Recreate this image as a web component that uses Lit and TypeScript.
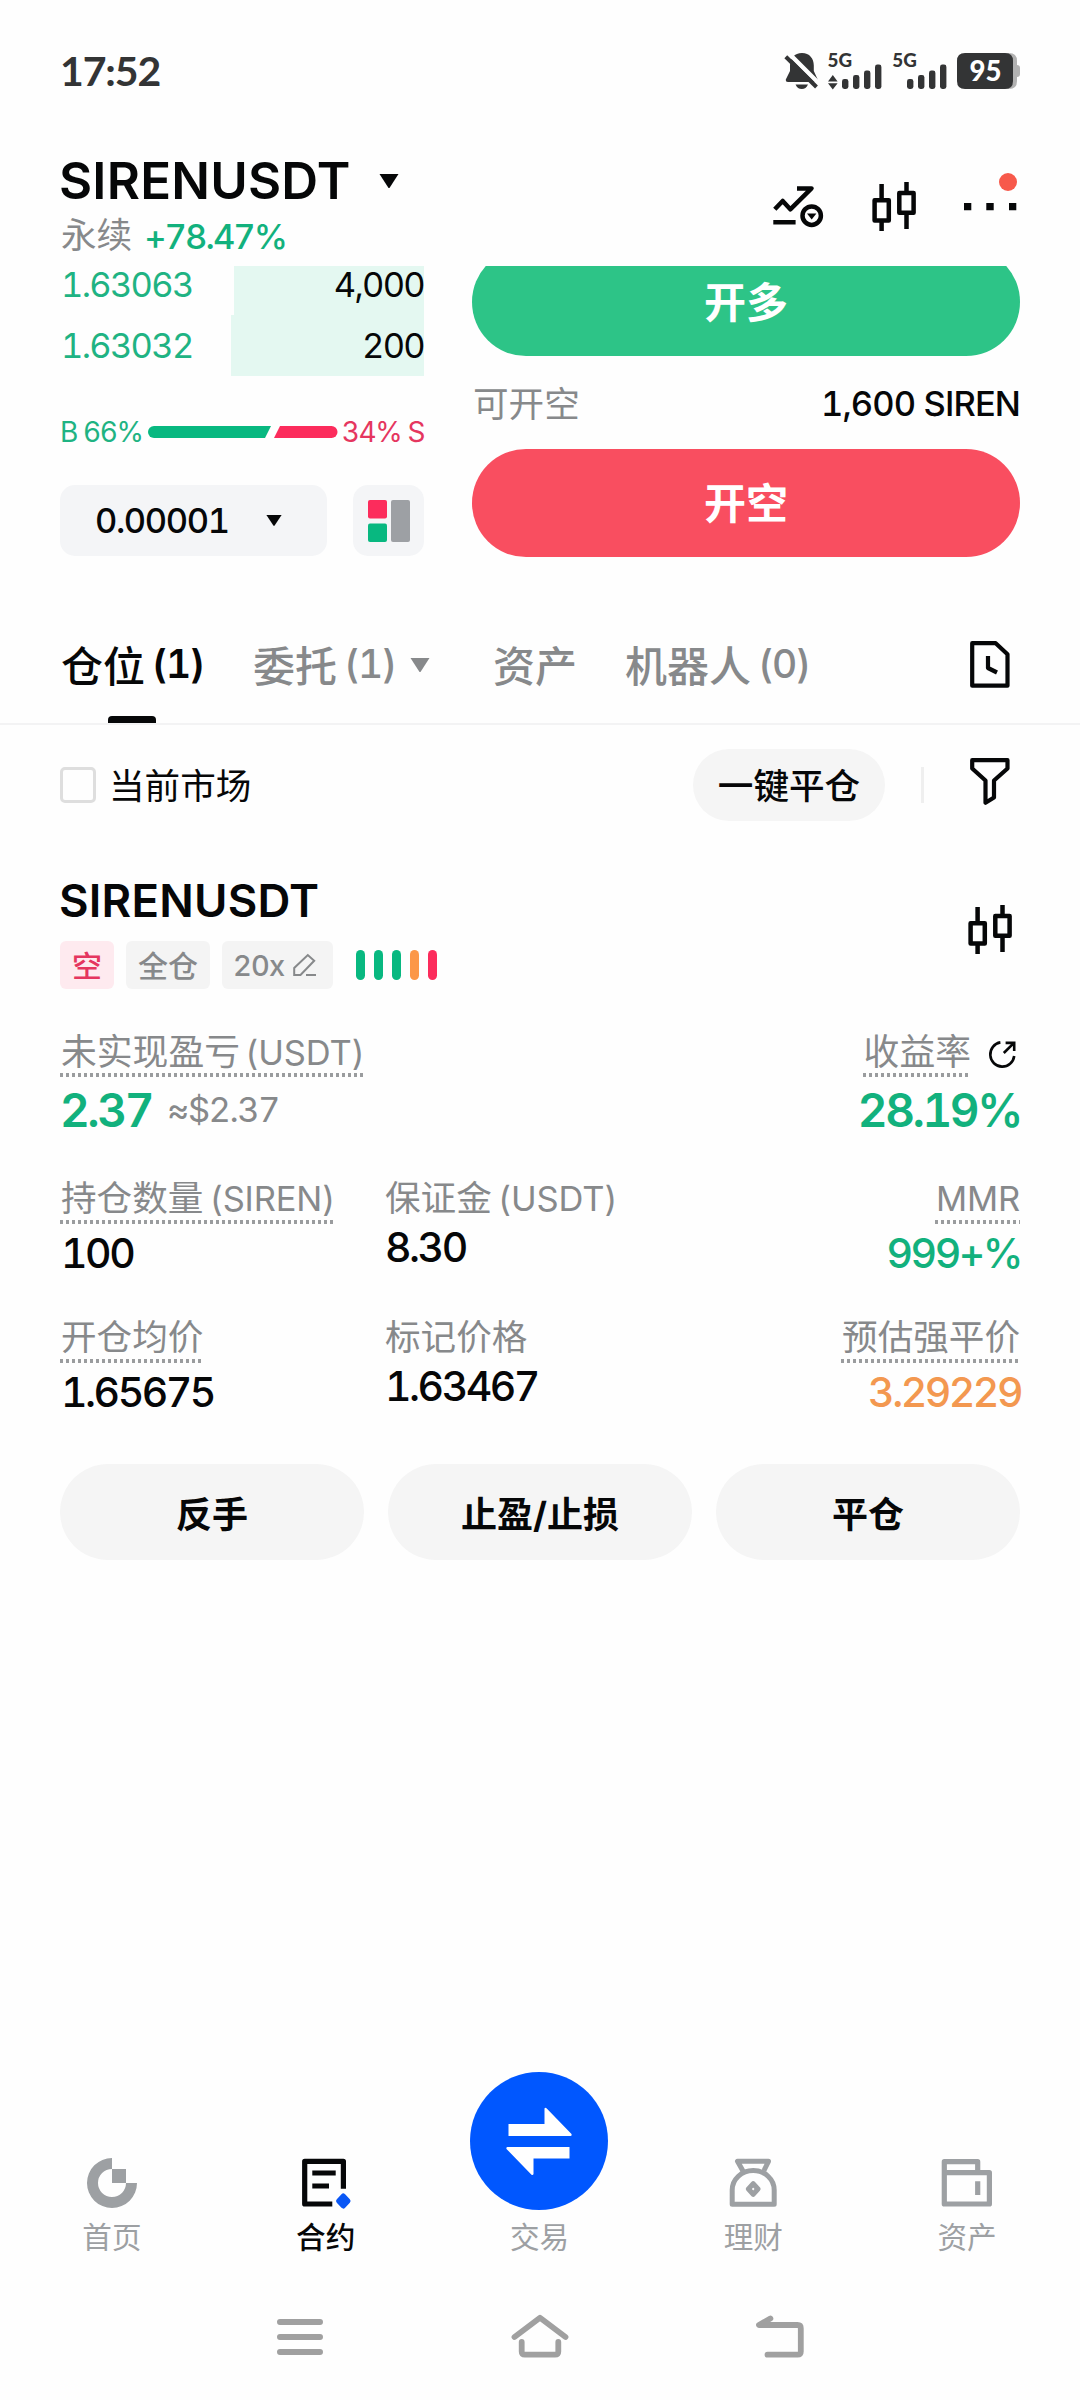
import { LitElement, html, css, svg, nothing } from "lit";
import { customElement, property } from "lit/decorators.js";

const candles = html`<svg width="44" height="49" viewBox="0 0 44 49" fill="none" stroke="#060708" stroke-width="4.5" stroke-linejoin="round">
  <path d="M2.6 18.3H16.8V38.4H2.6ZM9.6 2V18M9.6 38V49M27.3 11H41.6V30.8H27.3ZM34.5 0V11M34.5 31V47"/>
</svg>`;

const caret = (w: number, h: number, color: string) => html`<svg width=${w} height=${h} viewBox="0 0 20 14" preserveAspectRatio="none">
  <path d="M0.5 0H19.5L10.8 13.4Q10 14.4 9.2 13.4Z" fill=${color}/>
</svg>`;

const signalBars = (x: number) => svg`<g fill="#333435">
  <rect x=${x} y="26" width="6.4" height="10" rx="2.4"/>
  <rect x=${x + 11} y="22" width="6.4" height="14" rx="2.4"/>
  <rect x=${x + 22} y="17.5" width="6.4" height="18.5" rx="2.4"/>
  <rect x=${x + 33} y="11.5" width="6.4" height="24.5" rx="2.4"/>
</g>`;

/** A label over a value; the label may carry a dotted underline. */
@customElement("data-field")
class DataField extends LitElement {
  @property() label = "";
  @property() value = "";
  @property() tone = "";
  @property({ type: Boolean }) plain = false;
  @property({ type: Boolean }) end = false;

  static styles = css`
    :host { display: block; }
    .field { display: flex; flex-direction: column; align-items: flex-start; }
    .end { align-items: flex-end; }
    .label { font-size: 35.6px; line-height: 49px; height: 44px; color: #87898b; white-space: pre; padding-left: 1px; }
    .latin { font-size: 34.5px; letter-spacing: -0.2px; margin-left: -3px; }
    .latin.only { margin-left: 0; }
    .dots {
      height: 4px; margin-top: 2px;
      background: repeating-linear-gradient(90deg, #9a9c9e 0 3px, transparent 3px 6px);
    }
    .value { font-size: 41px; font-weight: 500; line-height: 50px; margin-top: 4px; letter-spacing: -2.5px; padding-left: 1px; color: #060708; }
    .end .value { margin-right: -1px; }
    .up { color: #12b17d; }
    .warn { color: #f39850; }
  `;

  render() {
    const [, cjk, latin] = /^([^\x00-\x7f]*)(.*)$/.exec(this.label)!;
    return html`<div class="field ${this.end ? "end" : ""}">
      <div>
        <div class="label">${cjk}${latin ? html`<span class="latin ${cjk ? "" : "only"}">${latin}</span>` : nothing}</div>
        ${this.plain ? nothing : html`<div class="dots"></div>`}
      </div>
      <div class="value ${this.tone}">${this.value}</div>
    </div>`;
  }
}

@customElement("app-root")
class AppRoot extends LitElement {
  static styles = css`
    :host {
      display: flex; flex-direction: column; box-sizing: border-box;
      width: 1080px; height: 2400px; overflow: hidden; background: #fefefe; color: #060708;
      font-family: Inter, "Noto Sans CJK SC", sans-serif;
      font-variant-numeric: tabular-nums;
    }
    svg { display: block; flex: none; overflow: visible; }
    div, span { box-sizing: border-box; white-space: nowrap; }

    .status { height: 142px; flex: none; display: flex; align-items: center; justify-content: space-between; padding: 0 60px; }
    .clock { font: 700 41px/50px Lato, sans-serif; color: #333435; letter-spacing: -1.1px; }
    .status-icons { display: flex; align-items: center; }
    .net { font: 900 19px Lato, sans-serif; fill: #333435; }
    .level { font: 900 29px Lato, sans-serif; fill: #fff; }

    .header { height: 124px; flex: none; display: flex; justify-content: space-between; padding: 8px 60px 0 59px; }
    .pair { display: flex; align-items: center; gap: 28px; height: 61px; font-size: 51px; font-weight: 600; letter-spacing: 0.2px; }
    .sub { display: flex; align-items: center; height: 50px; gap: 12px; font-size: 35.6px; line-height: 50px; color: #87898b; padding-left: 2px; }
    .change { color: #12b17d; font-size: 34.5px; font-weight: 500; letter-spacing: -1.9px; padding-top: 1px; }
    .tools { display: flex; align-items: flex-start; }
    .tools .trend { margin: 35px 49px 0 0; }
    .tools .kline { margin: 32px 48px 0 0; }
    .tools .more { margin-top: 22px; }

    .trade { height: 290px; flex: none; display: flex; gap: 48px; padding: 0 60px; }
    .book { width: 364px; display: flex; flex-direction: column; }
    .row { height: 61px; flex: none; display: flex; align-items: center; justify-content: space-between; font-size: 34.5px; line-height: 34px; padding: 0 0 0 1px; letter-spacing: -1.7px; }
    .row:first-child { height: 49px; align-items: flex-end; }
    .price { color: #1fb383; }
    .depth { align-self: stretch; display: flex; align-items: center; justify-content: flex-end; background: #e4f8f1; padding-right: 0; }
    .row:first-child .price, .row:first-child .depth { padding-bottom: 13px; }
    .row:first-child .depth { align-items: flex-end; }
    .ratio { height: 48px; margin-top: 32px; display: flex; align-items: center; justify-content: space-between; font-size: 28px; padding-left: 0; letter-spacing: -1.4px; }
    .ratio svg { margin-left: 2px; }
    .buy { color: #1fb383; }
    .sell { color: #e5365f; }
    .selects { display: flex; gap: 26px; margin-top: 29px; }
    .step { width: 267px; height: 71px; border-radius: 15px; background: #f4f5f7; display: flex; align-items: center; justify-content: space-between; padding: 0 45px 0 35px; font-size: 34.5px; font-weight: 500; letter-spacing: -1.4px; }
    .layout { width: 71px; height: 71px; border-radius: 15px; background: #f4f5f7; display: flex; align-items: center; justify-content: center; }

    .order { flex: 1; display: flex; flex-direction: column; height: 291px; }
    .cta { height: 108px; flex: none; border-radius: 54px; display: flex; align-items: center; justify-content: center; color: #fff; font-size: 42px; font-weight: 700; padding-bottom: 5px; }
    .clip { height: 90px; flex: none; display: flex; flex-direction: column; justify-content: flex-end; overflow: hidden; }
    .long { background: #2dc487; }
    .short { background: #f94e60; }
    .avail { height: 93px; flex: none; display: flex; align-items: center; justify-content: space-between; font-size: 35.6px; color: #87898b; padding-left: 1px; }
    .avail span { padding-bottom: 3px; }
    .avail .amount { color: #060708; font-size: 34.5px; font-weight: 500; letter-spacing: -0.9px; padding: 1px 0 0; }

    .tabs { height: 169px; flex: none; display: flex; align-items: flex-end; border-bottom: 2px solid #f3f3f4; padding: 0 60px; color: #87898b; font-size: 42px; }
    .tab { height: 116px; display: flex; align-items: center; position: relative; padding-left: 1px; padding-bottom: 4px; font-weight: 500; }
    .tab .cnt { font-size: 39px; letter-spacing: -1.2px; margin-left: 7px; padding-top: 1px; }
    .tab svg { margin: 3px 0 0 14px; }
    .t1 { width: 192px; color: #060708; }
    .t1 .cnt { font-weight: 600; }
    .t1::after { content: ""; position: absolute; left: 48px; bottom: 0; width: 48px; height: 7px; border-radius: 4px 4px 0 0; background: #060708; }
    .t2 { width: 240px; }
    .t3 { width: 132px; }
    .t4 { flex: 1; }
    .tabicon { height: 116px; display: flex; align-items: center; padding-right: 10px; padding-bottom: 2px; }

    .filters { height: 120px; flex: none; display: flex; align-items: center; padding: 0 70px 0 60px; font-size: 35.6px; }
    .box { width: 36px; height: 36px; border: 3px solid #dedede; border-radius: 5px; margin-right: 13px; }
    .market { padding-bottom: 3px; }
    .grow { flex: 1; }
    .closeall { width: 192px; height: 72px; border-radius: 36px; background: #f5f5f5; display: flex; align-items: center; justify-content: center; font-weight: 500; margin-right: 36px; padding-bottom: 3px; }
    .sep { width: 3px; height: 36px; background: #efefef; margin-right: 46px; }
    .funnel { margin-top: -8px; }

    .card { padding: 0 60px; display: flex; flex-direction: column; flex: none; }
    .cardhead { height: 144px; display: flex; justify-content: space-between; padding-right: 8px; margin-top: 27px; }
    .name { height: 58px; line-height: 58px; font-size: 45.5px; font-weight: 600; letter-spacing: 0.2px; margin-left: -1px; }
    .tags { display: flex; align-items: center; margin-top: 11px; gap: 12px; }
    .tag { height: 48px; border-radius: 6px; background: #f4f4f4; color: #87898b; font-size: 30px; display: flex; align-items: center; padding: 0 12px 3px; font-weight: 500; }
    .tag.side { background: #feeaef; color: #e5365f; }
    .tag.lev { font-size: 29px; gap: 9px; padding: 0 15px 0 11px; width: 111px; letter-spacing: -0.8px; }
    .risk { display: flex; gap: 9px; margin-left: 11px; }
    .risk i { width: 9px; height: 30px; border-radius: 5px; background: #08b880; }
    .risk .mid { background: #fc9748; }
    .risk .high { background: #fc2c5c; }
    .cardhead svg { margin-top: 33px; }
    .tag svg { margin-top: 0; }

    .pnl { display: flex; justify-content: space-between; height: 158px; padding-top: 11px; }
    .lbl { font-size: 35.8px; line-height: 51px; height: 44px; color: #87898b; white-space: pre; padding-left: 1px; }
    .lbl .latin { font-size: 34.5px; letter-spacing: -0.2px; white-space: pre; margin-left: -4px; }
    .dots { height: 4px; margin-top: 2px; background: repeating-linear-gradient(90deg, #9a9c9e 0 3px, transparent 3px 6px); }
    .roi { display: flex; flex-direction: column; align-items: flex-end; }
    .roihead { display: flex; gap: 17px; padding-right: 3px; }
    .roihead svg { margin-top: 13px; }
    .big { font-size: 46px; font-weight: 600; line-height: 56px; color: #12b17d; letter-spacing: -2.4px; margin-top: 5px; display: flex; align-items: center; gap: 15px; }
    .roi .big { margin-right: -1px; }
    .approx { font-size: 34.5px; font-weight: 400; color: #87898b; letter-spacing: -1.5px; }
    .grid { display: grid; grid-template-columns: 324px 1fr auto; grid-auto-rows: 139px; }
    .actions { display: flex; gap: 24px; margin-top: 12px; }
    .action { flex: 1; height: 96px; border-radius: 48px; background: #f5f5f5; display: flex; align-items: center; justify-content: center; font-size: 36px; font-weight: 700; padding-bottom: 1px; }

    .nav { margin-top: auto; flex: none; height: 190px; display: flex; align-items: flex-end; padding: 0 6px 0 5px; color: #9da0a3; }
    .item { flex: 1; display: flex; flex-direction: column; align-items: center; gap: 6px; font-size: 29.6px; line-height: 42px; height: 100%; justify-content: flex-end; padding-bottom: 1px; }
    .on { color: #060708; font-weight: 500; }
    .sys { height: 141px; flex: none; display: flex; padding: 54px 180px 0; }
    .key { flex: 1; display: flex; justify-content: center; }
  `;

  render() {
    return html`
      <div class="status">
        <span class="clock">17:52</span>
        <div class="status-icons">
          <svg width="235" height="36" viewBox="0 0 235 36">
            <path d="M17 0C9.500 0 5 5.500 5 12.500V18L0.800 26.500Q0.600 29 3 29H30.500Q33 29 32.700 26.500L28.800 18V12.500C28.800 5.500 24.500 0 17 0Z" fill="#333435"/>
            <path d="M10.500 31.500H23Q21 36 16.800 36Q12.500 36 10.500 31.500Z" fill="#333435"/>
            <path d="M4.500 1L35 31.500" stroke="#fefefe" stroke-width="4.500"/>
            <path d="M0.800 3.800L31.500 34" stroke="#333435" stroke-width="4"/>
            <text class="net" x="42.500" y="14" textLength="24.500" lengthAdjust="spacingAndGlyphs">5G</text>
            <path d="M43 28.500L47.800 22L52.600 28.500ZM43 30.200L47.800 36.500L52.600 30.200Z" fill="#333435"/>
            ${signalBars(57)}
            <text class="net" x="107.300" y="14" textLength="24.500" lengthAdjust="spacingAndGlyphs">5G</text>
            ${signalBars(122)}
            <path d="M180 0H224Q232 0 232 8V12Q235 12 235 15V21Q235 24 232 24V28Q232 36 224 36H180Z" fill="#b2b2b2"/>
            <path d="M180 0H220Q228 0 228 8V28Q228 36 220 36H180Q172 36 172 28V8Q172 0 180 0Z" fill="#333435"/>
            <text class="level" x="184.500" y="28.300" textLength="32" lengthAdjust="spacingAndGlyphs">95</text>
          </svg>
        </div>
      </div>

      <div class="header">
        <div>
          <div class="pair"><span>SIRENUSDT</span>${caret(20, 14, "#060708")}</div>
          <div class="sub"><span>永续</span><span class="change">+78.47%</span></div>
        </div>
        <div class="tools">
          <svg class="trend" width="50" height="42" viewBox="0 0 50 42" fill="none" stroke="#060708" stroke-width="4.500">
            <path d="M1.800 24.300L9.700 16L17.300 24.300L38.500 3.400H24M0.300 37.300H22.600" stroke-linejoin="round"/>
            <circle cx="38.700" cy="30.700" r="9.200"/>
            <path d="M34 28.400H43.400L38.700 34.400Z" fill="#060708" stroke="none"/>
          </svg>
          <div class="kline">${candles}</div>
          <svg class="more" width="56" height="40" viewBox="0 0 56 40">
            <path d="M0 31H7.300V38.300H0ZM22.300 31H29.700V38.300H22.300ZM45 31H52.300V38.300H45Z" fill="#060708"/>
            <circle cx="44" cy="10" r="9" fill="#f7594b"/>
          </svg>
        </div>
      </div>

      <div class="trade">
        <div class="book">
          <div class="rows">
            ${[["1.63063", "4,000", 190], ["1.63032", "200", 193]].map(
              ([p, a, w]) => html`<div class="row"><span class="price">${p}</span><span class="depth" style="width:${w}px">${a}</span></div>`
            )}
          </div>
          <div class="ratio">
            <span class="buy">B 66%</span>
            <svg width="190" height="12" viewBox="0 0 190 12">
              <path d="M6 0H123L117 12H6A6 6 0 0 1 6 0Z" fill="#08b880"/>
              <path d="M132 0H183.500A6 6 0 0 1 183.500 12H126Z" fill="#fc2c5c"/>
            </svg>
            <span class="sell">34% S</span>
          </div>
          <div class="selects">
            <div class="step"><span>0.00001</span>${caret(16, 11, "#060708")}</div>
            <div class="layout">
              <svg width="42" height="42" viewBox="0 0 42 42">
                <rect width="19" height="18.500" rx="2" fill="#fc2c5c"/>
                <rect y="23.500" width="19" height="18.500" rx="2" fill="#08b880"/>
                <rect x="23" width="19" height="42" rx="2" fill="#9da0a4"/>
              </svg>
            </div>
          </div>
        </div>
        <div class="order">
          <div class="clip"><div class="cta long">开多</div></div>
          <div class="avail"><span>可开空</span><span class="amount">1,600 SIREN</span></div>
          <div class="cta short">开空</div>
        </div>
      </div>

      <div class="tabs">
        <div class="tab t1">仓位<span class="cnt">(1)</span></div>
        <div class="tab t2">委托<span class="cnt">(1)</span>${caret(20, 14, "#87898b")}</div>
        <div class="tab t3">资产</div>
        <div class="tab t4">机器人<span class="cnt">(0)</span></div>
        <div class="tabicon">
          <svg width="40" height="47" viewBox="0 0 40 47" fill="none" stroke="#060708" stroke-width="4.200" stroke-linejoin="round">
            <path d="M2.200 2.200H25.700L37.500 13.300V44.700H2.200Z"/>
            <path d="M18 15V27L27 31.500"/>
          </svg>
        </div>
      </div>

      <div class="filters">
        <span class="box"></span><span class="market">当前市场</span><span class="grow"></span>
        <span class="closeall">一键平仓</span><span class="sep"></span>
        <svg class="funnel" width="40" height="47" viewBox="0 0 40 47" fill="none" stroke="#060708" stroke-width="4.200" stroke-linejoin="round">
          <path d="M2.200 2.200H37.500V10.500L24 22.500V39.500L15.500 44.700V22.500L2.200 10.500Z"/>
        </svg>
      </div>

      <div class="card">
        <div class="cardhead">
          <div>
            <div class="name">SIRENUSDT</div>
            <div class="tags">
              <span class="tag side">空</span>
              <span class="tag">全仓</span>
              <span class="tag lev">20x
                <svg width="24" height="24" viewBox="0 0 24 24" fill="none" stroke="#87898b" stroke-width="2">
                  <path d="M1.200 22V15L14.800 2L21.200 7.800L7.500 22ZM13 22H23"/>
                </svg>
              </span>
              <div class="risk"><i></i><i></i><i></i><i class="mid"></i><i class="high"></i></div>
            </div>
          </div>
          ${candles}
        </div>

        <div class="pnl">
          <div>
            <div class="lbl">未实现盈亏<span class="latin"> (USDT)</span></div>
            <div class="dots"></div>
            <div class="big">2.37<span class="approx">≈$2.37</span></div>
          </div>
          <div class="roi">
            <div class="roihead">
              <div><div class="lbl">收益率</div><div class="dots"></div></div>
              <svg width="29" height="29" viewBox="0 0 29 29" fill="none" stroke="#060708" stroke-width="2.600">
                <path d="M12.400 2.400A12 12.200 0 1 0 26.200 16M15.800 13L26 2.900M17.600 2.900H26.200V11"/>
              </svg>
            </div>
            <div class="big">28.19%</div>
          </div>
        </div>

        <div class="grid">
          <data-field label="持仓数量 (SIREN)" value="100"></data-field>
          <data-field label="保证金 (USDT)" value="8.30" plain></data-field>
          <data-field label="MMR" value="999+%" tone="up" end></data-field>
          <data-field label="开仓均价" value="1.65675"></data-field>
          <data-field label="标记价格" value="1.63467" plain></data-field>
          <data-field label="预估强平价" value="3.29229" tone="warn" end></data-field>
        </div>

        <div class="actions">
          <div class="action">反手</div>
          <div class="action">止盈/止损</div>
          <div class="action">平仓</div>
        </div>
      </div>

      <div class="nav">
        <div class="item">
          <svg width="52" height="54" viewBox="0 0 52 54" fill="#9da0a3">
            <path d="M26 2A25 25 0 1 0 51 27H40A14 14 0 1 1 26 13ZM26 13H40V27H26Z"/>
          </svg>首页
        </div>
        <div class="item on">
          <svg width="52" height="54" viewBox="0 0 52 54" fill="none" stroke="#060708" stroke-width="5.200">
            <path d="M43.400 32.700V5.300H4.700V48H32.300M12.300 17H35.700M12.300 30H29" stroke-linejoin="round"/>
            <path d="M43.300 40L48 45L43.300 50L38.600 45Z" fill="#0a57f5" stroke="#0a57f5" stroke-width="5" stroke-linejoin="round"/>
          </svg>合约
        </div>
        <div class="item">
          <svg width="138" height="138" viewBox="0 0 138 138">
            <circle cx="69" cy="69" r="69" fill="#0057ff"/>
            <path d="M38.500 52H74.500V36.500Q75 35.300 76.500 36.200L101.500 62Q102 64 100.500 64H38.500ZM99.500 75V86.500H63.500V102Q63 103.600 61.500 102.800L36.500 77Q36 75 37.500 75Z" fill="#fff"/>
          </svg>交易
        </div>
        <div class="item">
          <svg width="49" height="54" viewBox="0 0 49 54" fill="none" stroke="#9da0a3" stroke-width="5" stroke-linejoin="round">
            <path d="M3.200 48.300V34A21 19.500 0 0 1 45.200 34V48.300ZM13.700 14.500L8.500 5.300H39.500L35 14.500M24.200 27.700L29 33L24.200 38.300L19.400 33Z"/>
          </svg>理财
        </div>
        <div class="item">
          <svg width="52" height="54" viewBox="0 -1 52 54" fill="none" stroke="#9da0a3" stroke-width="5.200" stroke-linejoin="round">
            <path d="M3.300 15.700H48.400V47H3.300V4.700H36.700V15.700M36.700 24.300V38"/>
          </svg>资产
        </div>
      </div>

      <div class="sys">
        <div class="key">
          <svg width="46" height="46" viewBox="0 0 46 46" fill="none" stroke="#a0a0a0" stroke-width="6" stroke-linecap="round">
            <path d="M3 9H43M3 24H43M3 39H43"/>
          </svg>
        </div>
        <div class="key">
          <svg width="60" height="48" viewBox="0 0 60 48" fill="none" stroke="#a0a0a0" stroke-width="5.800" stroke-linecap="round" stroke-linejoin="round">
            <path d="M4.500 24L30 4.800L55.500 24M11.700 29V38.500Q11.700 41.700 15 41.700H45Q48.300 41.700 48.300 38.500V29"/>
          </svg>
        </div>
        <div class="key">
          <svg width="52" height="48" viewBox="0 0 52 48" fill="none" stroke="#a0a0a0" stroke-width="5.800" stroke-linecap="round" stroke-linejoin="round">
            <path d="M16.400 5.500L5 12H43.500Q46.800 12 46.800 15.300V38.500Q46.800 41.700 43.500 41.700H13.500"/>
          </svg>
        </div>
      </div>
    `;
  }
}
